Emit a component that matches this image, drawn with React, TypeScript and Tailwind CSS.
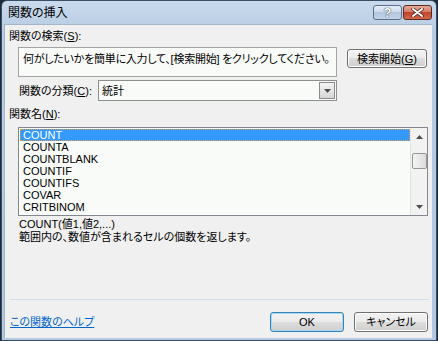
import React from 'react';

const font =
  "font-['Liberation_Sans','Noto_Sans_CJK_JP',sans-serif] [font-feature-settings:'palt'] text-[11px] leading-[12px] text-black whitespace-nowrap";

const functions = ['COUNT', 'COUNTA', 'COUNTBLANK', 'COUNTIF', 'COUNTIFS', 'COVAR', 'CRITBINOM'];

function Arrow({ up }: { up?: boolean }) {
  return (
    <svg width="7" height="4" viewBox="0 0 7 4">
      {up ? <path d="M0 4 L3.5 0 L7 4 Z" fill="#4d4d4d" /> : <path d="M0 0 L7 0 L3.5 4 Z" fill="#4d4d4d" />}
    </svg>
  );
}

function VistaButton({ children, primary, className }: { children: React.ReactNode; primary?: boolean; className?: string }) {
  return (
    <button
      className={`flex items-center justify-center rounded-[3px] border bg-[linear-gradient(#f2f2f2_0%,#ebebeb_50%,#dddddd_50%,#cfcfcf_100%)] ${
        primary
          ? 'border-[#3c7fb1] shadow-[inset_0_0_0_1px_#9fdaf6]'
          : 'border-[#707070] shadow-[inset_0_0_0_1px_#fcfcfc]'
      } ${className ?? ''}`}
    >
      {children}
    </button>
  );
}

export default function App() {
  return (
    <div className={`w-[438px] h-[341px] bg-[#1f2b38] overflow-hidden ${font}`}>
      <div className="ml-px w-[436px] h-[341px] flex flex-col rounded-t-[6px] border border-[#3a4e66] bg-[linear-gradient(#c9daec,#b7cce3_30px,#b4c9e1)]">
        {/* Title bar */}
        <div className="h-[23px] flex justify-between shrink-0">
          <div className="pl-[6px] pt-[6px] text-[12px] leading-[12px]">関数の挿入</div>
          <div className="flex gap-[1px] mt-[4px] mr-[4px] h-[15px]">
            <div className="w-[29px] h-[15px] rounded-[3px] border border-[#5b6f88] bg-[linear-gradient(#e4edf7_0%,#c9d8ea_50%,#b3c6de_50%,#c3d4e8_100%)] flex items-center justify-center">
              <span className="text-[13px] leading-[13px] font-bold text-white [text-shadow:0_0_1px_#2a3a50,0_0_1px_#2a3a50]">?</span>
            </div>
            <div className="w-[29px] h-[15px] rounded-[3px] border border-[#5b2a22] bg-[linear-gradient(#e8a898_0%,#d27763_50%,#c0432c_50%,#d4674f_100%)] flex items-center justify-center">
              <svg width="13" height="9" viewBox="0 0 13 9">
                <path d="M2 1 L11 8 M11 1 L2 8" stroke="#4a1a12" strokeWidth="3.4" strokeLinecap="round" />
                <path d="M2 1 L11 8 M11 1 L2 8" stroke="#ffffff" strokeWidth="2" strokeLinecap="round" />
              </svg>
            </div>
          </div>
        </div>

        {/* Client area */}
        <div className="flex-1 ml-[2px] mr-[4px] mb-[2px] bg-[#f0f0f0] border-l border-t border-[#a4b6ca] flex flex-col pb-[6px]">
          <div className="ml-[4px] mt-[5px]">
            関数の検索(<span className="underline">S</span>):
          </div>

          <div className="flex mt-[5px]">
            <div className="ml-[13px] w-[319px] h-[30px] border border-[#a3a3a3] bg-[#f8fbf8] pl-[4px] pt-[5px] tracking-[-0.25px] overflow-hidden">
              何がしたいかを簡単に入力して、[検索開始] をクリックしてください。
            </div>
            <VistaButton className="ml-[10px] mt-[2px] w-[80px] h-[19px]">
              検索開始(<span className="underline">G</span>)
            </VistaButton>
          </div>

          <div className="flex items-center mt-[3px] h-[21px]">
            <div className="ml-[14px] w-[79px]">
              関数の分類(<span className="underline">C</span>):
            </div>
            <div className="w-[239px] h-[21px] border border-[#8e8f8f] bg-[#f8fbf8] flex items-center justify-between pl-[3px] pr-px">
              <span>統計</span>
              <div className="w-[16px] h-[17px] border border-[#8a8a8a] bg-[linear-gradient(#f4f4f4,#d6d6d6)] flex items-center justify-center">
                <Arrow />
              </div>
            </div>
          </div>

          <div className="ml-[4px] mt-[7px]">
            関数名(<span className="underline">N</span>):
          </div>

          <div className="ml-[13px] mt-[7px] w-[410px] h-[89px] border border-[#828790] bg-[#f8fbf8] flex">
            <div className="flex-1 pl-[1px] pt-[1px]">
              {functions.map((f, i) => (
                <div
                  key={f}
                  className={`h-[12px] pl-[3px] text-[11px] leading-[12px] ${
                    i === 0 ? 'bg-[#3399ff] text-white outline outline-1 outline-dotted outline-[#d9a24a] -outline-offset-1' : ''
                  }`}
                >
                  {f}
                </div>
              ))}
            </div>
            <div className="w-[17px] bg-[#f2f2f2] border-l border-[#e3e3e3] flex flex-col items-center">
              <div className="h-[17px] flex items-center justify-center">
                <Arrow up />
              </div>
              <div className="mt-[8px] w-[15px] h-[16px] rounded-[2px] border border-[#979797] bg-[linear-gradient(90deg,#f4f4f4,#dcdcdc)]" />
              <div className="flex-1" />
              <div className="h-[17px] flex items-center justify-center">
                <Arrow />
              </div>
            </div>
          </div>

          <div className="ml-[14px] mt-[2px] leading-[13px]">
            <div>COUNT(値1,値2,...)</div>
            <div>範囲内の、数値が含まれるセルの個数を返します。</div>
          </div>

          <div className="mt-auto ml-[5px] mr-[3px] h-px bg-[#d2dde6]" />

          <div className="flex items-center mt-[12px] h-[20px]">
            <a className="ml-[5px] text-[#0066cc] underline">この関数のヘルプ</a>
            <div className="flex-1" />
            <VistaButton primary className="w-[74px] h-[20px]">
              OK
            </VistaButton>
            <VistaButton className="ml-[10px] mr-[4px] w-[74px] h-[20px]">キャンセル</VistaButton>
          </div>
        </div>
      </div>
    </div>
  );
}
